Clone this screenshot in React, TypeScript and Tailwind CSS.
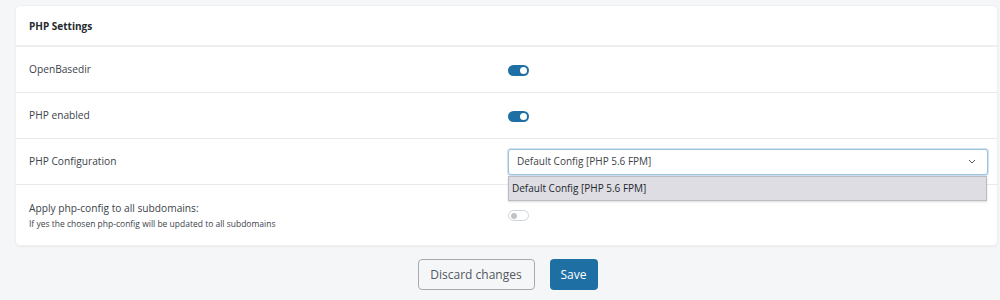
import React from "react";

function Toggle({ on }: { on: boolean }) {
  return on ? (
    <div className="w-[21px] h-[11px] rounded-full bg-[#1e6fa3] flex items-center justify-end pr-[2px]">
      <div className="w-[7px] h-[7px] rounded-full bg-white" />
    </div>
  ) : (
    <div className="w-[21px] h-[11px] rounded-full border border-[#ced4da] bg-white flex items-center pl-[2px]">
      <div className="w-[6px] h-[6px] rounded-full bg-[#c0c4c8]" />
    </div>
  );
}

export default function App() {
  return (
    <div
      className="w-[1000px] h-[300px] bg-[#f5f6f8] pt-[5px] pl-[15px] pr-[2px] overflow-hidden"
      style={{ fontFamily: '"Open Sans", "Noto Sans", sans-serif' }}
    >
      <div className="bg-white rounded-[5px] shadow-[0_1px_2px_rgba(0,0,0,0.05)] border border-[#eef0f2]">
        <div className="h-[41px] flex items-center pl-[13px] pt-[1px] border-b-2 border-[#eceef0] text-[10px] font-bold text-[#23282d]">
          PHP Settings
        </div>
        <div className="h-[46px] flex items-center pt-[1px] border-b border-[#e8eaed]">
          <div className="w-[492px] pl-[13px] text-[10.2px] text-[#3c434a]">OpenBasedir</div>
          <Toggle on />
        </div>
        <div className="h-[46px] flex items-center pt-[1px] border-b border-[#e8eaed]">
          <div className="w-[492px] pl-[13px] text-[10.2px] text-[#3c434a]">PHP enabled</div>
          <Toggle on />
        </div>
        <div className="h-[46px] flex items-center border-b border-[#e8eaed] relative">
          <div className="w-[492px] pl-[13px] text-[10.2px] text-[#3c434a]">PHP Configuration</div>
          <div className="w-[480px] h-[26px] rounded-[3px] border border-[#9cc3de] shadow-[0_0_0_1px_rgba(120,170,210,0.35)] flex items-center justify-between pl-[8px] pr-[11px] text-[10px] text-[#3c434a] bg-white">
            <span>Default Config [PHP 5.6 FPM]</span>
            <svg width="8" height="5" viewBox="0 0 8 5" fill="none">
              <path d="M1 1 L4 4 L7 1" stroke="#50575e" strokeWidth="1" />
            </svg>
          </div>
          <div className="absolute left-[492px] top-[37px] w-[479px] h-[25px] bg-[#dedde3] border border-[#b9bcc0] shadow-[0_1px_2px_rgba(0,0,0,0.15)] flex items-center pl-[3px] text-[10px] text-[#23282d] z-10">
            Default Config [PHP 5.6 FPM]
          </div>
        </div>
        <div className="h-[60px] flex items-center">
          <div className="w-[492px] pl-[13px] text-[#3c434a]">
            <div className="text-[10.2px] leading-[15px]">Apply php-config to all subdomains:</div>
            <div className="text-[8.5px] leading-[13px] mt-[1px]">If yes the chosen php-config will be updated to all subdomains</div>
          </div>
          <div className="mt-[1px]">
            <Toggle on={false} />
          </div>
        </div>
      </div>
      <div className="flex justify-center gap-[15px] mt-[13px] pl-[2px]">
        <button className="w-[117px] h-[31px] rounded-[4px] border border-[#a7aaad] bg-transparent text-[12px] text-[#50575e]">
          Discard changes
        </button>
        <button className="w-[48px] h-[31px] rounded-[4px] bg-[#1e6fa3] text-[12px] text-white">
          Save
        </button>
      </div>
    </div>
  );
}
